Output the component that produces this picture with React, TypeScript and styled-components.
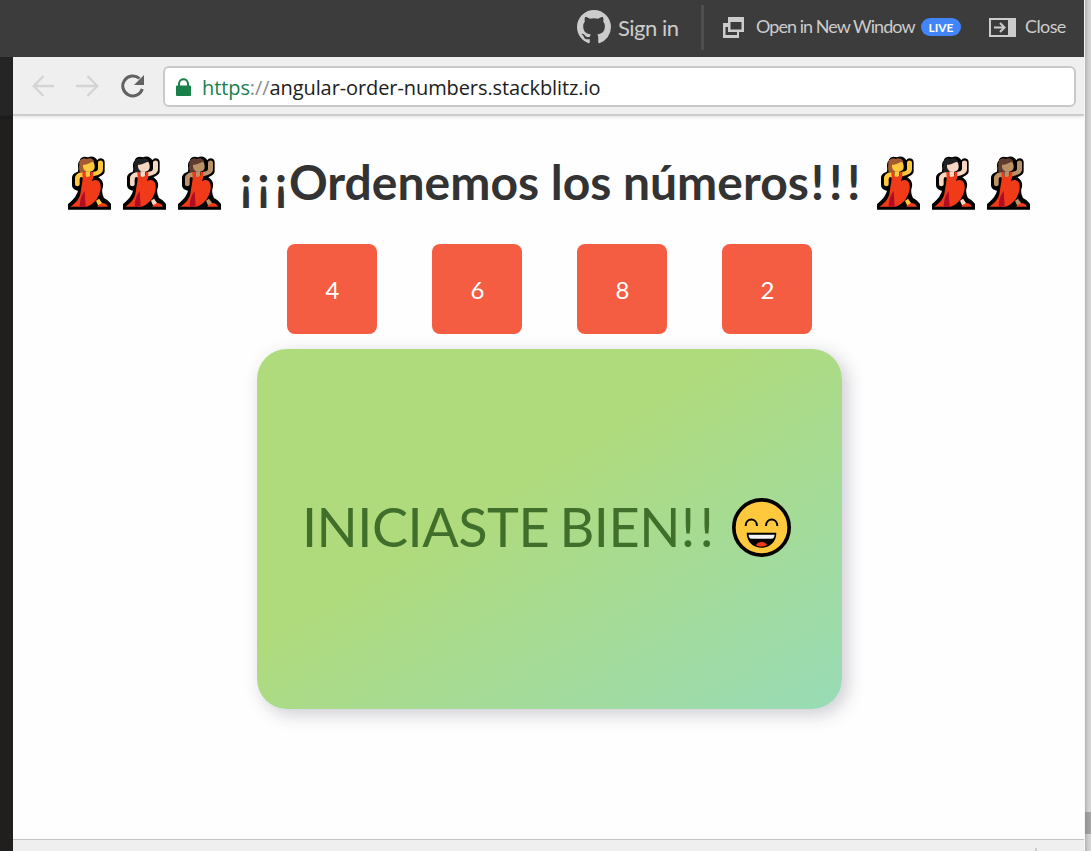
import React from "react";
import styled, { createGlobalStyle } from "styled-components";

const GlobalStyle = createGlobalStyle`
  * { box-sizing: border-box; }
  html, body { margin: 0; padding: 0; overflow: hidden; background: #fefefe; }
  body { font-family: Lato, "Liberation Sans", sans-serif; }
  svg { display: block; flex: none; }
`;

const Screen = styled.div`
  display: flex;
  width: 1091px;
  height: 851px;
  overflow: hidden;
`;

const Workspace = styled.div`
  display: flex;
  flex-direction: column;
  width: 1084px;
`;

const ScrollTrack = styled.div`
  width: 7px;
  border-left: 1px solid #f6f6f6;
  padding-top: 812px;
  background: linear-gradient(to right, #b4b4b4, #d4d4d4 70%);
`;

const ScrollThumb = styled.div`
  height: 22px;
  background: linear-gradient(to right, #929292, #a8a8a8);
`;

const TopBar = styled.header`
  display: flex;
  align-items: center;
  height: 57px;
  flex: none;
  padding: 0 0 3px 577px;
  background: #3c3c3c;
  color: #cccccc;
`;

const Label = styled.span<{ $size: number; $left: number; $width: number; $spacing?: number; $drop?: number; $lift?: number }>`
  flex: none;
  margin-left: ${(p) => p.$left}px;
  padding-top: ${(p) => p.$drop ?? 0}px;
  padding-bottom: ${(p) => p.$lift ?? 0}px;
  width: ${(p) => p.$width}px;
  font-size: ${(p) => p.$size}px;
  letter-spacing: ${(p) => p.$spacing ?? 0}px;
  line-height: 26px;
  white-space: nowrap;
`;

const Divider = styled.span`
  width: 3px;
  height: 45px;
  margin: 0 19px 0 22px;
  flex: none;
  background: #4f4f4f;
`;

const LiveBadge = styled.span`
  width: 40px;
  height: 18px;
  margin: 0 28px 0 6px;
  border-radius: 9px;
  background: #4285f9;
  color: #fff;
  font-size: 12px;
  font-weight: 700;
  line-height: 19px;
  text-align: center;
  flex: none;
`;

const Body = styled.div`
  display: flex;
  flex: 1;
  min-height: 0;
`;

const Gutter = styled.div`
  width: 13px;
  flex: none;
  background: linear-gradient(#252525 58px, #1c1a19 60px, #211f1e 64px);
`;

const Preview = styled.div`
  display: flex;
  flex-direction: column;
  flex: 1;
  min-width: 0;
`;

const AddressBar = styled.div`
  display: flex;
  align-items: center;
  height: 59px;
  flex: none;
  padding: 0 8px 0 18px;
  border-bottom: 2px solid #cccccc;
  box-shadow: 0 1px 4px rgba(0, 0, 0, 0.12);
  background: #efefef;
`;

const NavIcons = styled.div`
  display: flex;
  align-items: center;
  width: 132px;
  gap: 21px;
`;

const UrlField = styled.div`
  display: flex;
  align-items: center;
  flex: 1;
  height: 41px;
  padding-left: 11px;
  margin-top: 2px;
  border: 2px solid #c9c9c9;
  border-radius: 6px;
  background: #fff;
`;

const Url = styled.span`
  margin-left: 11px;
  padding-top: 2px;
  color: #202020;
  font-family: "Open Sans", "Noto Sans", sans-serif;
  font-size: 20px;
  letter-spacing: -0.09px;
  line-height: 28px;
  white-space: nowrap;
`;

const Scheme = styled.span`
  color: #188048;
`;

const Slashes = styled.span`
  color: #8b8b8b;
`;

const Page = styled.main`
  display: flex;
  flex-direction: column;
  align-items: center;
  flex: 1;
  padding: 33px 0 0 2px;
`;

const Title = styled.h1`
  display: flex;
  align-items: center;
  justify-content: space-between;
  width: 963px;
  height: 66px;
  margin: 0 0 29px;
  padding-right: 1px;
  color: #333;
  font-size: 48px;
  line-height: 66px;
  white-space: nowrap;
`;

const TitleText = styled.span`
  margin-top: -1px;
  padding-left: 2px;
`;

const Opening = styled.span`
  margin-right: -3.2px;
  letter-spacing: 4.6px;
`;

const Closing = styled.span`
  margin: 0 -4.6px 0 2px;
  letter-spacing: 4.6px;
`;

const Dancers = styled.span`
  display: flex;
  gap: 12px;
  margin-top: 1px;
`;

const Tiles = styled.div`
  display: flex;
  gap: 55px;
`;

const Tile = styled.div`
  display: flex;
  align-items: center;
  justify-content: center;
  width: 90px;
  height: 90px;
  padding: 1px 0 0 1px;
  border-radius: 8px;
  background: #f55d42;
  color: #fff;
  font-size: 24px;
`;

const ResultCard = styled.section`
  display: flex;
  align-items: center;
  width: 585px;
  height: 360px;
  margin-top: 15px;
  padding: 0 0 4px 45px;
  border-radius: 30px;
  background: linear-gradient(to bottom right, #b0db7c 40%, #98dbb6);
  box-shadow: 5px 5px 18px rgba(40, 40, 70, 0.24);
`;

const Message = styled.span`
  width: 430px;
  color: #3f6f2a;
  font-size: 54px;
  letter-spacing: -0.5px;
  word-spacing: -3px;
  line-height: 64px;
  white-space: nowrap;
`;

const Marks = styled.span`
  margin-left: 1px;
  letter-spacing: 4.2px;
`;

const Footer = styled.footer`
  display: flex;
  height: 12px;
  flex: none;
  border-top: 1px solid #c4c4c4;
  background: #efefef;
`;

const FooterTick = styled.span`
  width: 2px;
  height: 3px;
  margin: 8px 0 0 1022px;
  background: #cccccc;
`;

const Arrow = ({ flip = false }: { flip?: boolean }) => (
  <svg width="24" height="24" viewBox="0 0 24 24" fill="none" stroke="#d4d4d4" strokeWidth="2.4">
    <path d={flip ? "M0 12H21M11.5 2L21.3 12L11.5 22" : "M23 12H2M12.5 2L2.7 12L12.5 22"} />
  </svg>
);

const outline = "M35 14C37 2 50 0 60 4C72 -3 85 5 88 13C92 4 108 5 110 17V45C110 55 101 59 91 64C106 73 108 86 103 100C101 109 105 121 108 126C114 130 123 135 129 144V161H0V144C13 134 26 120 30 104C20 102 12 97 12 86V66C12 56 20 50 29 48C31 43 31 39 30 31C30 23 31 17 35 14Z";

const Dancer = ({ skin, hair }: { skin: string; hair: string }) => (
  <svg width="43" height="54" viewBox="0 0 129 162">
    <path d={outline} fill="#000" />
    <path d="M35 48C33 39 33 31 34 25C33 10 46 6 56 10L68 10L70 26L50 48Z" fill={hair} />
    <path d="M45 24L60 18L73 14C78 18 80 25 80 32C80 42 73 47 62 47C51 47 45 40 45 31Z" fill={skin} />
    <path d="M35 20C37 7 48 5 57 9C66 4 76 9 79 17C67 16 64 26 45 26Z" fill={hair} />
    <path d="M90 20C90 11 105 11 105 20V39C105 52 94 57 75 61L75 47C84 47 90 44 90 38Z" fill={skin} />
    <path d="M52 46H66V68H52ZM40 49L49 49L45 65C37 60 35 66 35 73V85C35 93 21 93 21 85V67C21 57 31 50 40 49Z" fill={skin} />
    <path d="M84 134L93 128L104 143L91 150Z" fill={skin} />
    <path d="M43 48H51V57C52 65 65 65 67 57V48H76V63L72 76C82 68 94 73 97 84C101 100 94 116 87 128C78 140 67 150 53 152H7C21 143 36 128 38 108C40 91 44 76 44 66Z" fill="#f13b18" />
    <path d="M50 105C40 117 35 134 35 152H53Z" fill="#b10d22" />
    <path d="M88 152C91 142 96 149 101 141C109 140 118 144 119 152Z" fill="#f13b18" />
  </svg>
);

const DancerTrio = () => (
  <Dancers>
    <Dancer skin="#ffc83d" hair="#a35b31" />
    <Dancer skin="#f7d7c4" hair="#202123" />
    <Dancer skin="#bb9167" hair="#603b30" />
  </Dancers>
);

const GithubMark = () => (
  <svg width="34" height="34" viewBox="0 0 16 16" fill="#cccccc">
    <path d="M8 0C3.58 0 0 3.58 0 8c0 3.54 2.29 6.53 5.47 7.59.4.07.55-.17.55-.38 0-.19-.01-.82-.01-1.49-2.01.37-2.53-.49-2.69-.94-.09-.23-.48-.94-.82-1.13-.28-.15-.68-.52-.01-.53.63-.01 1.08.58 1.23.82.72 1.21 1.87.87 2.33.66.07-.52.28-.87.51-1.07-1.78-.2-3.64-.89-3.64-3.95 0-.87.31-1.59.82-2.15-.08-.2-.36-1.02.08-2.12 0 0 .67-.21 2.2.82.64-.18 1.32-.27 2-.27s1.36.09 2 .27c1.53-1.04 2.2-.82 2.2-.82.44 1.1.16 1.92.08 2.12.51.56.82 1.27.82 2.15 0 3.07-1.87 3.75-3.65 3.95.29.25.54.73.54 1.48 0 1.07-.01 1.93-.01 2.2 0 .21.15.46.55.38A8.01 8.01 0 0 0 16 8c0-4.42-3.58-8-8-8Z" />
  </svg>
);

const Smiley = () => (
  <svg width="59" height="59" viewBox="0 0 177 177">
    <circle cx="88.5" cy="88.5" r="83" fill="#ffc83d" stroke="#000" strokeWidth="11" />
    <path d="M41 84C41 58 75 58 75 84M102 84C102 58 136 58 136 84" fill="none" stroke="#000" strokeWidth="6" />
    <path d="M44 104H133C133 164 44 164 44 104Z" fill="#000" />
    <path d="M50 110H128C127 117 125 120 120 122H57C52 120 50 116 50 110Z" fill="#f4f4f5" />
    <path d="M72 141C77 129 100 129 105 141C96 147 81 147 72 141Z" fill="#f13b18" />
  </svg>
);

export default function App() {
  return (
    <Screen>
      <GlobalStyle />
      <Workspace>
        <TopBar>
          <GithubMark />
          <Label $size={22} $left={7} $width={61} $spacing={-0.5} $drop={2}>Sign in</Label>
          <Divider />
          <svg width="21" height="21" viewBox="0 0 21 21">
            <path d="M0 6H5V14H16V21H0Z" fill="#ccc" />
            <path d="M2.5 10H5V15H14V18H2.5Z" fill="#3c3c3c" />
            <path d="M5 0H21V15H5Z" fill="#ccc" />
            <path d="M7.5 5H18.5V12.5H7.5Z" fill="#3c3c3c" />
          </svg>
          <Label $size={18} $left={12} $width={159} $spacing={-0.95} $lift={2}>Open in New Window</Label>
          <LiveBadge>LIVE</LiveBadge>
          <svg width="27" height="19" viewBox="0 0 27 19">
            <path d="M0 0H27V19H0Z" fill="#ccc" />
            <path d="M2 2H19V17H2Z" fill="#3c3c3c" />
            <path d="M5 9.5H15.5M11 5L15.5 9.5L11 14" fill="none" stroke="#ccc" strokeWidth="2" />
          </svg>
          <Label $size={18} $left={9} $width={42} $spacing={-0.6} $lift={2}>Close</Label>
        </TopBar>
        <Body>
          <Gutter />
          <Preview>
            <AddressBar>
              <NavIcons>
                <Arrow />
                <Arrow flip />
                <svg width="24" height="24" viewBox="0 0 24 24">
                  <path d="M21.3 15A10 10 0 1 1 18.5 4.5" fill="none" stroke="#626262" strokeWidth="3" />
                  <path d="M23 1V11H13Z" fill="#626262" />
                </svg>
              </NavIcons>
              <UrlField>
                <svg width="15" height="18" viewBox="0 0 15 18">
                  <path d="M3 9V6C3 -.4 12 -.4 12 6V9" fill="none" stroke="#188048" strokeWidth="2" />
                  <rect y="7.5" width="15" height="10.5" rx="1" fill="#188048" />
                </svg>
                <Url><Scheme>https</Scheme><Slashes>://</Slashes>angular-order-numbers.stackblitz.io</Url>
              </UrlField>
            </AddressBar>
            <Page>
              <Title>
                <DancerTrio />
                <TitleText><Opening>¡¡¡</Opening>Ordenemos los números<Closing>!!!</Closing></TitleText>
                <DancerTrio />
              </Title>
              <Tiles>
                {[4, 6, 8, 2].map((n) => <Tile key={n}>{n}</Tile>)}
              </Tiles>
              <ResultCard>
                <Message>INICIASTE BIEN<Marks>!!</Marks></Message>
                <Smiley />
              </ResultCard>
            </Page>
            <Footer><FooterTick /></Footer>
          </Preview>
        </Body>
      </Workspace>
      <ScrollTrack><ScrollThumb /></ScrollTrack>
    </Screen>
  );
}
